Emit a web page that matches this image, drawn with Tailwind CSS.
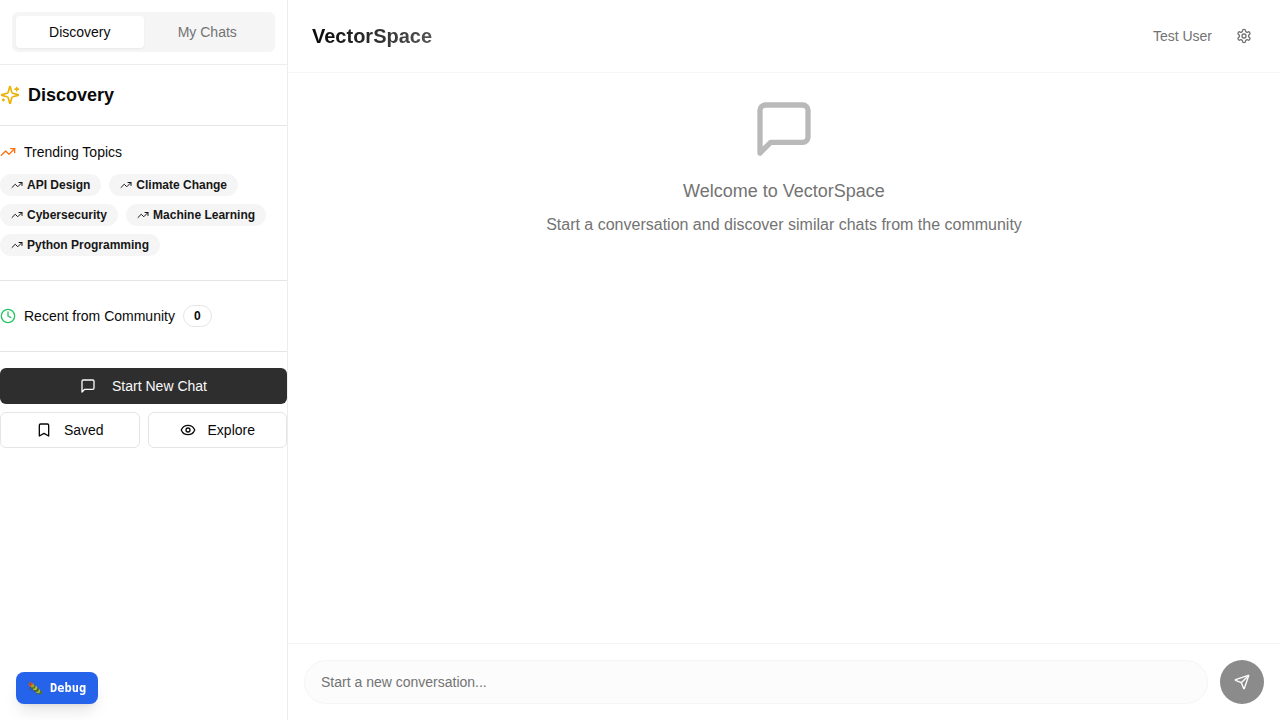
<!DOCTYPE html>
<html lang="en">
<head>
<meta charset="utf-8">
<meta name="viewport" content="width=device-width, initial-scale=1">
<title>VectorSpace</title>
<script src="https://cdn.jsdelivr.net/npm/@tailwindcss/browser@4"></script>
</head>
<body class="flex h-screen overflow-hidden bg-white font-['Liberation_Sans',Arial,sans-serif] text-neutral-950 antialiased">
<svg class="hidden" aria-hidden="true">
  <symbol id="trend" viewBox="0 0 24 24" fill="none" stroke="currentColor" stroke-width="2" stroke-linecap="round" stroke-linejoin="round"><path d="M16 7h6v6"/><path d="m22 7-8.500 8.500-5-5L2 17"/></symbol>
  <symbol id="message" viewBox="0 0 24 24" fill="none" stroke="currentColor" stroke-width="2" stroke-linecap="round" stroke-linejoin="round"><path d="M21 15a2 2 0 0 1-2 2H7l-4 4V5a2 2 0 0 1 2-2h14a2 2 0 0 1 2 2z"/></symbol>
</svg>

<aside class="flex w-72 shrink-0 flex-col border-r border-[#ededed]">
  <div class="border-b border-[#ededed] p-3">
    <div role="tablist" class="grid h-10 grid-cols-2 rounded-md bg-neutral-100 p-1 text-sm">
      <button role="tab" aria-selected="true" class="rounded-sm bg-white shadow-xs">Discovery</button>
      <button role="tab" aria-selected="false" class="rounded-sm text-neutral-500">My Chats</button>
    </div>
  </div>
  <div class="flex items-center gap-2 border-b border-neutral-200 py-4">
    <svg class="size-5 text-[#eab308]" viewBox="0 0 24 24" fill="none" stroke="currentColor" stroke-width="2" stroke-linecap="round" stroke-linejoin="round"><path d="M9.937 15.5A2 2 0 0 0 8.5 14.063l-6.135-1.582a.5.5 0 0 1 0-.962L8.5 9.936A2 2 0 0 0 9.937 8.5l1.582-6.135a.5.5 0 0 1 .963 0L14.063 8.5A2 2 0 0 0 15.5 9.937l6.135 1.581a.5.5 0 0 1 0 .964L15.5 14.063a2 2 0 0 0-1.437 1.437l-1.582 6.135a.5.5 0 0 1-.963 0z"/><path d="M20 3v4"/><path d="M22 5h-4"/><path d="M4 17v2"/><path d="M5 18H3"/></svg>
    <h2 class="text-lg font-bold">Discovery</h2>
  </div>
  <section class="border-b border-neutral-200 pt-4 pb-6">
    <div class="mb-3 flex items-center gap-2">
      <svg class="size-4 text-[#f97316]"><use href="#trend"/></svg>
      <h3 class="text-sm">Trending Topics</h3>
    </div>
    <div class="flex flex-wrap gap-2 text-xs font-bold text-neutral-900">
      <button class="flex items-center gap-1 rounded-full border border-transparent bg-neutral-100 px-2.5 py-0.5"><svg class="size-3"><use href="#trend"/></svg>API Design</button>
      <button class="flex items-center gap-1 rounded-full border border-transparent bg-neutral-100 px-2.5 py-0.5"><svg class="size-3"><use href="#trend"/></svg>Climate Change</button>
      <button class="flex items-center gap-1 rounded-full border border-transparent bg-neutral-100 px-2.5 py-0.5"><svg class="size-3"><use href="#trend"/></svg>Cybersecurity</button>
      <button class="flex items-center gap-1 rounded-full border border-transparent bg-neutral-100 px-2.5 py-0.5"><svg class="size-3"><use href="#trend"/></svg>Machine Learning</button>
      <button class="flex items-center gap-1 rounded-full border border-transparent bg-neutral-100 px-2.5 py-0.5"><svg class="size-3"><use href="#trend"/></svg>Python Programming</button>
    </div>
  </section>
  <section class="flex items-center gap-2 border-b border-neutral-200 py-6">
    <svg class="size-4 text-[#22c55e]" viewBox="0 0 24 24" fill="none" stroke="currentColor" stroke-width="2" stroke-linecap="round" stroke-linejoin="round"><circle cx="12" cy="12" r="10"/><path d="M12 6v6l4 2"/></svg>
    <h3 class="text-sm">Recent from Community</h3>
    <span class="rounded-full border border-neutral-200 px-2.5 py-0.5 text-xs font-bold">0</span>
  </section>
  <div class="grid grid-cols-2 gap-2 pt-4 text-sm">
    <button class="col-span-2 flex h-9 items-center justify-center gap-4 rounded-md bg-[#2e2e2e] text-neutral-50"><svg class="size-4"><use href="#message"/></svg>Start New Chat</button>
    <button class="flex h-9 items-center justify-center gap-3 rounded-md border border-neutral-200"><svg class="size-4" viewBox="0 0 24 24" fill="none" stroke="currentColor" stroke-width="2" stroke-linecap="round" stroke-linejoin="round"><path d="m19 21-7-4-7 4V5a2 2 0 0 1 2-2h10a2 2 0 0 1 2 2z"/></svg>Saved</button>
    <button class="flex h-9 items-center justify-center gap-3 rounded-md border border-neutral-200"><svg class="size-4" viewBox="0 0 24 24" fill="none" stroke="currentColor" stroke-width="2" stroke-linecap="round" stroke-linejoin="round"><path d="M2.062 12.348a1 1 0 0 1 0-.696 10.750 10.750 0 0 1 19.876 0 1 1 0 0 1 0 .696 10.750 10.750 0 0 1-19.876 0"/><circle cx="12" cy="12" r="3"/></svg>Explore</button>
  </div>
</aside>

<div class="flex min-w-0 flex-1 flex-col">
  <header class="flex items-center justify-between border-b border-neutral-100 py-4 pr-4 pl-6">
    <h1 class="bg-linear-to-r from-neutral-950 to-[#545454] bg-clip-text text-xl font-bold text-transparent">VectorSpace</h1>
    <div class="flex items-center gap-3 text-sm text-neutral-500">
      <span>Test User</span>
      <button aria-label="Settings" class="flex size-10 items-center justify-center"><svg class="size-4" viewBox="0 0 24 24" fill="none" stroke="currentColor" stroke-width="2" stroke-linecap="round" stroke-linejoin="round"><path d="M12.22 2h-.44a2 2 0 0 0-2 2v.18a2 2 0 0 1-1 1.73l-.43.25a2 2 0 0 1-2 0l-.15-.08a2 2 0 0 0-2.73.73l-.22.38a2 2 0 0 0 .73 2.73l.15.1a2 2 0 0 1 1 1.72v.51a2 2 0 0 1-1 1.74l-.15.09a2 2 0 0 0-.73 2.73l.22.38a2 2 0 0 0 2.73.73l.15-.08a2 2 0 0 1 2 0l.43.25a2 2 0 0 1 1 1.73V20a2 2 0 0 0 2 2h.44a2 2 0 0 0 2-2v-.18a2 2 0 0 1 1-1.73l.43-.25a2 2 0 0 1 2 0l.15.08a2 2 0 0 0 2.73-.73l.22-.39a2 2 0 0 0-.73-2.73l-.15-.08a2 2 0 0 1-1-1.74v-.5a2 2 0 0 1 1-1.74l.15-.09a2 2 0 0 0 .73-2.73l-.22-.38a2 2 0 0 0-2.73-.73l-.15.08a2 2 0 0 1-2 0l-.43-.25a2 2 0 0 1-1-1.73V4a2 2 0 0 0-2-2z"/><circle cx="12" cy="12" r="3"/></svg></button>
    </div>
  </header>
  <main class="flex flex-1 flex-col items-center p-6 text-center text-neutral-500">
    <svg class="mb-4 size-16 text-[#b9b9b9]"><use href="#message"/></svg>
    <h2 class="mb-2 text-lg">Welcome to VectorSpace</h2>
    <p>Start a conversation and discover similar chats from the community</p>
  </main>
  <form class="flex gap-3 border-t border-neutral-100 p-4">
    <input type="text" aria-label="Message" placeholder="Start a new conversation..." class="h-11 min-w-0 flex-1 rounded-full border border-neutral-100 bg-[#fcfcfc] px-4 text-sm placeholder:text-neutral-500">
    <button type="button" aria-label="Send" class="flex size-11 items-center justify-center rounded-full bg-[#8b8b8b] text-white"><svg class="size-4" viewBox="0 0 24 24" fill="none" stroke="currentColor" stroke-width="2" stroke-linecap="round" stroke-linejoin="round"><path d="M14.536 21.686a.5.5 0 0 0 .937-.024l6.5-19a.496.496 0 0 0-.635-.635l-19 6.5a.5.5 0 0 0-.024.937l7.93 3.18a2 2 0 0 1 1.112 1.11z"/><path d="m21.854 2.147-10.940 10.939"/></svg></button>
  </form>
</div>

<button class="fixed bottom-4 left-4 flex items-center gap-2 rounded-lg bg-[#2563eb] px-3 py-2 font-['DejaVu_Sans_Mono',monospace] text-xs font-bold text-white shadow-lg">
  <svg class="size-3.5" viewBox="0 0 14 14" aria-hidden="true">
    <path d="M3 5 2 8M5 7l-1 2M7 9l-1 2M10 11l-1 2" stroke="#5b4a1e" stroke-width="1" stroke-linecap="round"/>
    <circle cx="12" cy="11.500" r="1.900" fill="#55721f"/>
    <circle cx="10" cy="10" r="2.200" fill="#a3b83c"/>
    <circle cx="8.600" cy="8.600" r="2.200" fill="#4b651b"/>
    <circle cx="7" cy="7" r="2.300" fill="#a9bd43"/>
    <circle cx="5.300" cy="5.500" r="2.200" fill="#526d20"/>
    <circle cx="4.200" cy="4.400" r="2" fill="#a6a83a"/>
    <circle cx="2.700" cy="3.400" r="2.100" fill="#d65b2a"/>
    <circle cx="2.200" cy="3.100" r=".6" fill="#46240f"/>
    <path d="M3.200 1.800 4.300.8" stroke="#7a4a20" stroke-width=".7" stroke-linecap="round"/>
  </svg>
  Debug
</button>
</body>
</html>
